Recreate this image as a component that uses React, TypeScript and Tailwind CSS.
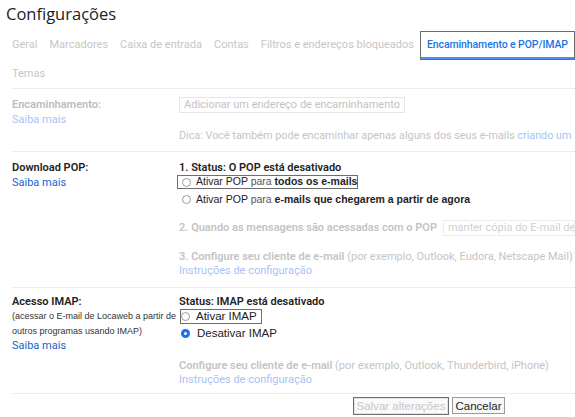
const tabs = ['Geral', 'Marcadores', 'Caixa de entrada', 'Contas', 'Filtros e endereços bloqueados'];

const Radio = ({ checked = false }: { checked?: boolean }) =>
  checked ? (
    <span className="flex h-[9px] w-[9px] shrink-0 items-center justify-center rounded-full bg-[#1a73e8]">
      <span className="h-[3px] w-[3px] rounded-full bg-white" />
    </span>
  ) : (
    <span className="h-[9px] w-[9px] shrink-0 rounded-full border border-[#9a9a9a] bg-white" />
  );

const App = () => {
  return (
    <div className="h-[417px] w-[575px] overflow-hidden bg-white font-['Roboto',sans-serif] text-[11px] text-[#222]">
      <h1 className="h-[31px] pl-[6px] pt-[2px] font-['Open_Sans',sans-serif] text-[16.5px] leading-[24px] text-[#202124]">
        Configurações
      </h1>

      {/* tabs */}
      <div className="flex h-[29px] items-stretch pl-[6px] text-[#c6c6c6]">
        {tabs.map((t) => (
          <div key={t} className="flex items-center whitespace-nowrap px-[6px]">{t}</div>
        ))}
        <div className="flex w-[155px] border border-[#6b6b6b]">
          <div className="flex flex-1 items-center justify-center whitespace-nowrap border-b-2 border-[#4b8ef0] pt-[1px] text-[10.5px] font-medium tracking-[-0.1px] text-[#1a73e8]">
            Encaminhamento e POP/IMAP
          </div>
        </div>
      </div>
      <div className="flex h-[28px] items-center pl-[12px] text-[#c6c6c6]">Temas</div>

      {/* encaminhamento */}
      <section className="ml-[12px] h-[63px] border-t border-[#ececec] pt-[8px]">
        <div className="flex">
          <div className="w-[167px] leading-[15px]">
            <p className="font-semibold text-[#bcbcbc]">Encaminhamento:</p>
            <p className="text-[#a9c2f2]">Saiba mais</p>
          </div>
          <div className="min-w-0 flex-1">
            <div className="inline-flex h-[16px] items-center border border-[#e6e6e6] px-[4px] text-[#c2c2c2]">
              Adicionar um endereço de encaminhamento
            </div>
            <p className="mt-[14px] whitespace-nowrap text-[10.8px] leading-[15px] text-[#c4c4c4]">
              Dica: Você também pode encaminhar apenas alguns dos seus e-mails <span className="text-[#a9c2f2]">criando um filtro!</span>
            </p>
          </div>
        </div>
      </section>

      {/* POP */}
      <section className="ml-[12px] h-[136px] border-t border-[#ececec] pt-[8px]">
        <div className="flex">
          <div className="w-[167px] leading-[15px]">
            <p className="font-semibold">Download POP:</p>
            <p className="text-[#1a5fd0]">Saiba mais</p>
          </div>
          <div className="min-w-0 flex-1">
            <p className="font-semibold leading-[15px]">1. Status: O POP está desativado</p>
            <div className="ml-[-2px] inline-flex h-[14px] items-center gap-[5px] border border-[#6e6e6e] pl-[4px] font-['Liberation_Sans',sans-serif] text-[10.5px]">
              <Radio />
              <span className="whitespace-nowrap">
                Ativar POP <span className="text-[#555]">para</span> <b>todos os e-mails</b>
              </span>
            </div>
            <div className="flex h-[15px] items-center gap-[5px] pl-[3px] font-['Liberation_Sans',sans-serif] text-[10.5px]">
              <Radio />
              <span className="whitespace-nowrap">
                Ativar POP <span className="text-[#555]">para</span> <b>e-mails que chegarem a partir de agora</b>
              </span>
            </div>
            <div className="mt-[13px] flex h-[16px] items-center gap-[6px] whitespace-nowrap">
              <span className="font-semibold text-[#c4c4c4]">2. Quando as mensagens são acessadas com o POP</span>
              <span className="flex h-[16px] flex-1 items-center overflow-hidden border border-[#ececec] px-[4px] text-[#d0d0d0]">
                manter cópia do E-mail de Locaweb
              </span>
            </div>
            <div className="mt-[14px] leading-[14px] text-[#c4c4c4]">
              <p className="whitespace-nowrap">
                <span className="font-semibold">3. Configure seu cliente de e-mail</span> (por exemplo, Outlook, Eudora, Netscape Mail)
              </p>
              <p className="text-[#a9c2f2]">Instruções de configuração</p>
            </div>
          </div>
        </div>
      </section>

      {/* IMAP */}
      <section className="ml-[12px] h-[106px] border-t border-[#ececec] pt-[6px]">
        <div className="flex">
          <div className="w-[167px]">
            <p className="font-semibold leading-[15px]">Acesso IMAP:</p>
            <p className="whitespace-nowrap font-['Liberation_Sans',sans-serif] text-[9px] leading-[15px] text-[#333]">
              (acessar o E-mail de Locaweb a partir de
            </p>
            <p className="font-['Liberation_Sans',sans-serif] text-[9px] leading-[15px] text-[#333]">outros programas usando IMAP)</p>
            <p className="leading-[14px] text-[#1a5fd0]">Saiba mais</p>
          </div>
          <div className="min-w-0 flex-1">
            <p className="font-semibold leading-[15px]">Status: IMAP está desativado</p>
            <div className="ml-[1px] inline-flex h-[15px] items-center gap-[6px] border border-[#6e6e6e] pr-[4px] font-['Liberation_Sans',sans-serif] text-[11.5px]">
              <Radio />
              <span className="whitespace-nowrap">Ativar IMAP</span>
            </div>
            <div className="flex h-[14px] items-center gap-[7px] pl-[2px] font-['Liberation_Sans',sans-serif] text-[11.5px]">
              <Radio checked />
              <span className="whitespace-nowrap">Desativar IMAP</span>
            </div>
            <div className="mt-[18px] leading-[14px] text-[#c4c4c4]">
              <p className="whitespace-nowrap">
                <span className="font-semibold">Configure seu cliente de e-mail</span> (por exemplo, Outlook, Thunderbird, iPhone)
              </p>
              <p className="text-[#a9c2f2]">Instruções de configuração</p>
            </div>
          </div>
        </div>
      </section>

      {/* buttons */}
      <div className="ml-[12px] flex gap-[3px] border-t border-[#ececec] pl-[341px] pt-[3px] font-['Liberation_Sans',sans-serif] text-[11.5px]">
        <button className="h-[18px] w-[96px] border border-[#6e6e6e] bg-[#fafafa] text-[#c6c6c6] shadow-[inset_0_0_0_1px_#e2e2e2]">
          Salvar alterações
        </button>
        <button className="h-[17px] w-[53px] border border-[#9a9a9a] bg-[#f7f7f7] text-[#222]">Cancelar</button>
      </div>
    </div>
  );
};

export default App;
